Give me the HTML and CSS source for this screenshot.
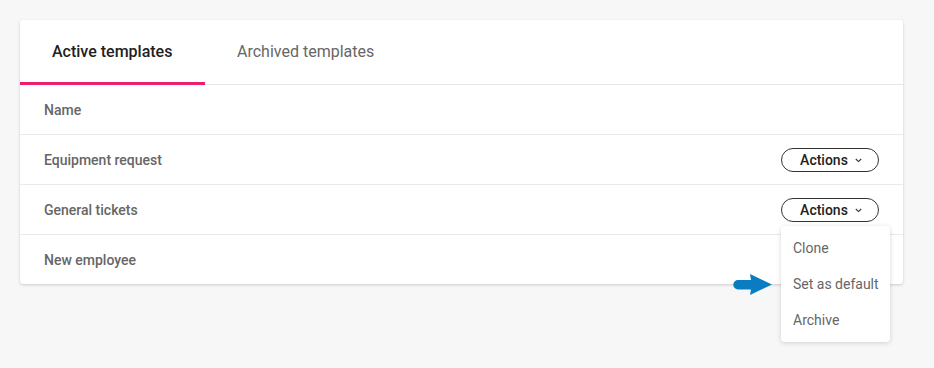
FILE: index.html
```html
<!DOCTYPE html>
<html>
<head>
<meta charset="utf-8">
<link rel="stylesheet" href="styles.css">
</head>
<body>
<div class="card">
  <div class="tabs">
    <div class="tab active">Active templates</div>
    <div class="tab">Archived templates</div>
  </div>
  <div class="row head"><span class="name">Name</span></div>
  <div class="row"><span class="name">Equipment request</span>
    <button class="actions">Actions <svg class="chev" width="7" height="5" viewBox="0 0 7 5"><path d="M0.8 1 L3.5 3.6 L6.2 1" fill="none" stroke="#333" stroke-width="1.1"/></svg></button>
  </div>
  <div class="row"><span class="name">General tickets</span>
    <div class="menu-wrap">
      <button class="actions">Actions <svg class="chev" width="7" height="5" viewBox="0 0 7 5"><path d="M0.8 1 L3.5 3.6 L6.2 1" fill="none" stroke="#333" stroke-width="1.1"/></svg></button>
      <div class="menu">
        <div class="item">Clone</div>
        <div class="item">Set as default</div>
        <div class="item">Archive</div>
      </div>
      <svg class="arrow" width="42" height="24" viewBox="0 0 42 24"><path d="M6 7 L19 7 L18 1 L40 11.5 L18 22 L19 16.5 L6 16.5 A4.75 4.75 0 0 1 6 7 Z" fill="#0a7cc2"/></svg>
    </div>
  </div>
  <div class="row last"><span class="name">New employee</span></div>
</div>
</body>
</html>
```
FILE: styles.css
```css
html, body { margin: 0; padding: 0; }
body {
  background: #f7f7f7;
  font-family: Roboto, "Liberation Sans", sans-serif;
  width: 934px;
  height: 368px;
  overflow: hidden;
}
.card {
  margin: 20px 0 0 20px;
  width: 883px;
  background: #fff;
  border-radius: 3px;
  box-shadow: 0 1px 3px rgba(0,0,0,0.18);
}
.tabs {
  display: flex;
  height: 64px;
  border-bottom: 1px solid #e6e6e6;
}
.tab {
  padding: 0 32px 2px;
  display: flex;
  align-items: center;
  font-size: 16px;
  color: #666;
  box-sizing: border-box;
}
.tab.active {
  width: 185px;
  color: #222;
  font-weight: 500;
  border-bottom: 3px solid #ee1d6d;
  padding: 0 0 0 32px;
  margin-bottom: -1px;
}
.row {
  height: 49px;
  border-bottom: 1px solid #eaeaea;
  display: flex;
  align-items: center;
  justify-content: space-between;
  padding: 0 24px;
}
.row.last { border-bottom: none; }
.name {
  font-size: 14px;
  font-weight: 500;
  color: #666;
}
.actions {
  width: 98px;
  height: 24px;
  border: 1px solid #333;
  border-radius: 12px;
  background: #fff;
  font-family: Roboto, "Liberation Sans", sans-serif;
  font-size: 14px;
  font-weight: 500;
  color: #222;
  display: flex;
  align-items: center;
  justify-content: center;
  gap: 7px;
  padding: 0 0 0 2px;
  margin-top: 1px;
}
.chev { display: block; margin-top: 1px; }
.menu-wrap { position: relative; }
.menu {
  position: absolute;
  top: 29px;
  left: 0;
  width: 109px;
  background: #fff;
  border-radius: 4px;
  box-shadow: 0 1px 5px rgba(0,0,0,0.16);
  padding: 4px 0;
  z-index: 2;
}
.item {
  height: 36px;
  display: flex;
  align-items: center;
  padding-left: 12px;
  font-size: 14px;
  color: #666;
}
.arrow {
  position: absolute;
  left: -49px;
  top: 76px;
  z-index: 3;
}
```
